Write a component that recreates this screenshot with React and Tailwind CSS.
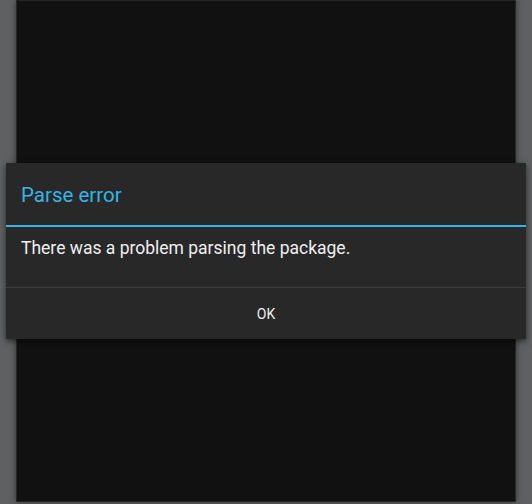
import React from 'react';

export default function App() {
  return (
    <div className="relative w-[532px] h-[504px] bg-[#5f6061] overflow-hidden" style={{ fontFamily: 'Roboto, "Liberation Sans", sans-serif' }}>
      <div className="ml-[16px] w-[500px] h-[502px] bg-[#111111] border border-[#262626] shadow-[0_0_6px_rgba(0,0,0,0.5)]" />

      <div className="absolute left-[6px] top-[163px] w-[520px] bg-[#282828] shadow-[0_2px_6px_rgba(0,0,0,0.6)]">
        <div className="h-[62px] flex items-center px-[15px]">
          <h1 className="text-[20.5px] text-[#33b5e5] leading-none pt-[3px]">Parse error</h1>
        </div>
        <div className="h-[2px] bg-[#33b5e5]" />
        <div className="h-[60px] px-[15px] pt-[9px]">
          <p className="text-[17.5px] text-[#efefef] leading-[24px]">There was a problem parsing the package.</p>
        </div>
        <div className="h-px bg-[#3c3c3c]" />
        <button className="w-full h-[51px] flex items-center justify-center text-[14px] text-[#ededed] pt-[2px]">
          OK
        </button>
      </div>
    </div>
  );
}
